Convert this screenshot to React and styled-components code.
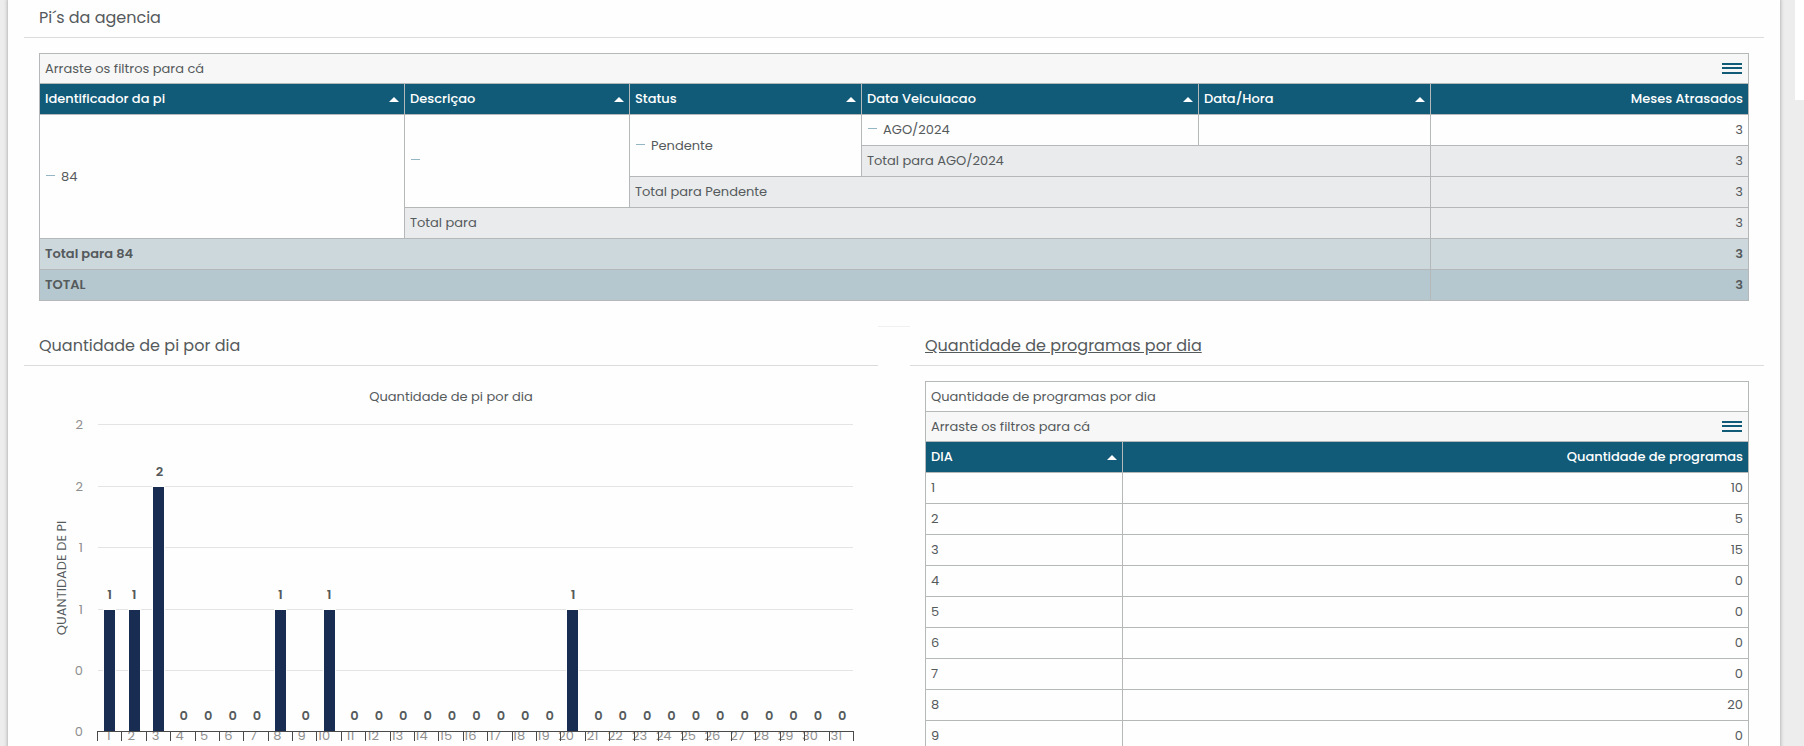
import React from "react";
import styled, { createGlobalStyle, css } from "styled-components";

const GlobalStyle = createGlobalStyle`
  *, *::before, *::after { box-sizing: border-box; }
  body {
    margin: 0;
    background: #ededed;
    color: #555a5c;
    font-family: Poppins, Inter, sans-serif;
    font-size: 13px;
    line-height: 20px;
  }
`;

const Viewport = styled.div`
  display: flex;
  align-items: flex-start;
  height: 100vh;
  overflow: hidden;
`;

const Sheet = styled.main`
  flex: 1;
  min-width: 0;
  min-height: calc(100vh + 4px);
  margin: -2px 15px 0 8px;
  padding: 0 16px;
  background: #fefefe;
  box-shadow: 0 0 4px rgba(0, 0, 0, 0.35);
`;

const ScrollRail = styled.div`
  width: 9px;
  height: 100vh;
`;

const ScrollThumb = styled.div`
  height: 100px;
  background: #fff;
`;

const Card = styled.section`
  flex: 1;
  min-width: 0;
  border-top: 1px solid transparent;
`;

const CardHeader = styled.header`
  display: flex;
  align-items: center;
  height: 39px;
  padding: 0 15px;
  border-bottom: 1px solid #dcdcdc;
`;

const CardTitle = styled.h2`
  margin: 0;
  font-size: 16px;
  font-weight: 400;
  line-height: 24px;
`;

const TitleLink = styled.a`
  color: inherit;
  text-decoration: underline;
`;

const CardBody = styled.div`
  padding: 15px 15px 25px;
`;

const CardRow = styled.div`
  display: flex;
`;

const Gutter = styled.div`
  width: 32px;
  border-top: 1px solid #f0f0f0;
`;

const Pivot = styled.div`
  border: 1px solid #b5b8b9;
`;

const PivotBar = styled.div`
  display: flex;
  align-items: center;
  justify-content: space-between;
  height: 30px;
  padding: 0 5px;
  border-bottom: 1px solid #b5b8b9;
  background: ${(p) => (p.$filter ? "#f7f7f7" : "transparent")};
`;

const MenuButton = styled.button`
  display: flex;
  padding: 1px;
  border: 0;
  background: none;
  color: #115b78;
  cursor: pointer;
`;

const PivotTable = styled.table`
  width: 100%;
  table-layout: fixed;
  border-collapse: separate;
  border-spacing: 0;

  tr > :last-child { border-right: 0; }
  tbody tr:last-child > td { height: 30px; border-bottom: 0; }
`;

const Col = styled.col`
  width: ${(p) => p.$share}%;
`;

const cellBox = css`
  height: 31px;
  padding: 0 5px;
  border: 0 solid #b5b8b9;
  border-width: 0 1px 1px 0;
  text-align: ${(p) => (p.$numeric ? "right" : "left")};
  white-space: nowrap;
`;

const HeadCell = styled.th`
  ${cellBox}
  background: #115b78;
  color: #fff;
  font-weight: 500;
`;

const HeadContent = styled.div`
  display: flex;
  align-items: center;
  justify-content: space-between;
`;

const tones = { plain: "transparent", sub: "#e9ebec", group: "#cdd8dd", grand: "#b6c8cf" };

const Cell = styled.td`
  ${cellBox}
  background: ${(p) => tones[p.$tone || "plain"]};
  font-weight: ${(p) => (p.$tone === "group" || p.$tone === "grand" ? 600 : 400)};
`;

const Collapse = styled.button`
  width: 11px;
  height: 11px;
  margin-right: 5px;
  padding: 0 1px;
  border: 0;
  background: none;
  cursor: pointer;

  &::before {
    content: "";
    display: block;
    height: 1px;
    background: #93b5c4;
  }
`;

const ChartSvg = styled.svg`
  display: block;
  width: 100%;
  height: auto;
  overflow: visible;
`;

const ChartText = styled.text`
  font-size: 13px;
  font-weight: ${(p) => (p.$strong ? 600 : 400)};
  fill: ${(p) => (p.$muted ? "#8f8f8f" : "#555a5c")};
`;

function MenuIcon() {
  return (
    <svg width="20" height="11" fill="currentColor" aria-hidden="true">
      <rect width="20" height="2" />
      <rect y="4" width="20" height="2" />
      <rect y="9" width="20" height="2" />
    </svg>
  );
}

function SortIcon() {
  return (
    <svg width="10" height="5" fill="#fff" aria-hidden="true">
      <path d="M0 5 L5 0 L10 5 Z" />
    </svg>
  );
}

function FilterBar() {
  return (
    <PivotBar $filter>
      <span>Arraste os filtros para cá</span>
      <MenuButton type="button" aria-label="Menu">
        <MenuIcon />
      </MenuButton>
    </PivotBar>
  );
}

function Columns({ weights }) {
  const total = weights.reduce((a, b) => a + b, 0);
  return (
    <colgroup>
      {weights.map((w, i) => (
        <Col key={i} $share={(w / total) * 100} />
      ))}
    </colgroup>
  );
}

function Head({ labels, measure }) {
  return (
    <thead>
      <tr>
        {labels.map((label) => (
          <HeadCell key={label} scope="col">
            <HeadContent>
              {label}
              <SortIcon />
            </HeadContent>
          </HeadCell>
        ))}
        <HeadCell scope="col" $numeric>{measure}</HeadCell>
      </tr>
    </thead>
  );
}

function Group({ children, rows }) {
  return (
    <Cell rowSpan={rows}>
      <Collapse type="button" aria-label="Recolher" />
      {children}
    </Cell>
  );
}

const subtotals = [
  { label: "Total para AGO/2024", span: 2, tone: "sub" },
  { label: "Total para Pendente", span: 3, tone: "sub" },
  { label: "Total para", span: 4, tone: "sub" },
  { label: "Total para 84", span: 5, tone: "group" },
  { label: "TOTAL", span: 5, tone: "grand" },
];

function AgencyPivot() {
  return (
    <Pivot>
      <FilterBar />
      <PivotTable>
        <Columns weights={[365, 225, 232, 337, 232, 317]} />
        <Head
          labels={["Identificador da pi", "Descriçao", "Status", "Data Veiculacao", "Data/Hora"]}
          measure="Meses Atrasados"
        />
        <tbody>
          <tr>
            <Group rows={4}>84</Group>
            <Group rows={3} />
            <Group rows={2}>Pendente</Group>
            <Group>AGO/2024</Group>
            <Cell />
            <Cell $numeric>3</Cell>
          </tr>
          {subtotals.map((s) => (
            <tr key={s.label}>
              <Cell colSpan={s.span} $tone={s.tone}>{s.label}</Cell>
              <Cell $numeric $tone={s.tone}>3</Cell>
            </tr>
          ))}
        </tbody>
      </PivotTable>
    </Pivot>
  );
}

const programs = [10, 5, 15, 0, 0, 0, 0, 20, 0];

function ProgramsPivot() {
  return (
    <Pivot>
      <PivotBar>Quantidade de programas por dia</PivotBar>
      <FilterBar />
      <PivotTable>
        <Columns weights={[197, 625]} />
        <Head labels={["DIA"]} measure="Quantidade de programas" />
        <tbody>
          {programs.map((count, i) => (
            <tr key={i}>
              <Cell>{i + 1}</Cell>
              <Cell $numeric>{count}</Cell>
            </tr>
          ))}
        </tbody>
      </PivotTable>
    </Pivot>
  );
}

const counts = { 1: 1, 2: 1, 3: 2, 8: 1, 10: 1, 20: 1 };
const days = Array.from({ length: 31 }, (_, i) => i + 1);
const plot = { left: 58.45, width: 756, base: 350 };
const step = plot.width / 31;
const gridLines = [
  { y: 43, label: "2" },
  { y: 105, label: "2" },
  { y: 166, label: "1" },
  { y: 228, label: "1" },
  { y: 289, label: "0" },
];

function DayChart() {
  return (
    <ChartSvg viewBox="0 0 824 360" role="img" aria-label="Quantidade de pi por dia">
      <ChartText x="412" y="20" textAnchor="middle">Quantidade de pi por dia</ChartText>
      <ChartText textAnchor="middle" transform="translate(27 197) rotate(-90)">
        QUANTIDADE DE PI
      </ChartText>
      {gridLines.map((g) => (
        <React.Fragment key={g.y}>
          <rect x="59" y={g.y} width="755" height="1" fill="#e4e4e4" />
          <ChartText $muted x="44" y={g.y + 5} textAnchor="end">{g.label}</ChartText>
        </React.Fragment>
      ))}
      <ChartText $muted x="44" y={plot.base + 5} textAnchor="end">0</ChartText>
      {days.map((day) => {
        const center = plot.left + step * (day - 0.5);
        const value = counts[day] || 0;
        const barHeight = value === 2 ? 244 : value * 121;
        const x = Math.round(center - 5.5);
        return (
          <React.Fragment key={day}>
            {value > 0 && (
              <>
                <rect x={x - 1} y={plot.base - barHeight - 1} width="13" height={barHeight + 1} fill="#fefefe" />
                <rect x={x} y={plot.base - barHeight} width="11" height={barHeight} fill="#192d52" />
              </>
            )}
            <ChartText $strong x={value === 1 ? center : center + 1} y={plot.base - barHeight - 11} textAnchor="middle">
              {value}
            </ChartText>
            <ChartText $muted x={center + 1} y="359" textAnchor="end">{day}</ChartText>
          </React.Fragment>
        );
      })}
      <g fill="#4a4a4a">
        <rect x="58" y={plot.base} width="757" height="1" />
        {[0, ...days].map((i) => (
          <rect key={i} x={Math.round(58 + step * i)} y={plot.base} width="1" height="10" />
        ))}
      </g>
    </ChartSvg>
  );
}

export default function App() {
  return (
    <>
      <GlobalStyle />
      <Viewport>
        <Sheet>
          <Card>
            <CardHeader>
              <CardTitle>Pi´s da agencia</CardTitle>
            </CardHeader>
            <CardBody>
              <AgencyPivot />
            </CardBody>
          </Card>
          <CardRow>
            <Card>
              <CardHeader>
                <CardTitle>Quantidade de pi por dia</CardTitle>
              </CardHeader>
              <CardBody>
                <DayChart />
              </CardBody>
            </Card>
            <Gutter />
            <Card>
              <CardHeader>
                <CardTitle>
                  <TitleLink href="#programas">Quantidade de programas por dia</TitleLink>
                </CardTitle>
              </CardHeader>
              <CardBody id="programas">
                <ProgramsPivot />
              </CardBody>
            </Card>
          </CardRow>
        </Sheet>
        <ScrollRail>
          <ScrollThumb />
        </ScrollRail>
      </Viewport>
    </>
  );
}
